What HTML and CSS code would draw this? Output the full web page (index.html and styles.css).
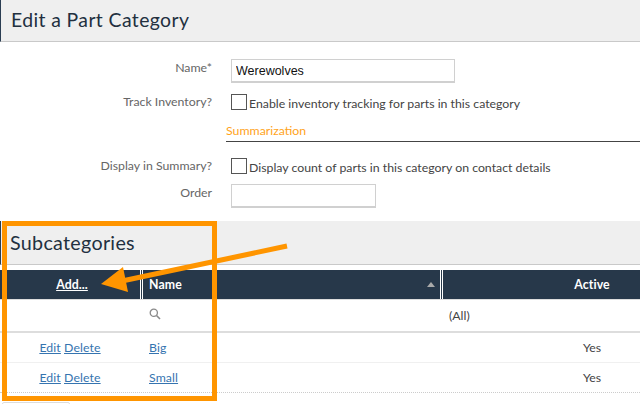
FILE: index.html
```html
<!DOCTYPE html>
<html>
    <head>
        <title>Edit a Part Category</title>
        <link rel="stylesheet" href="styles.css">
    </head>
    <body>
        <div class="pageTitle">Edit a Part Category</div>

        <div class="form">
            <div class="row nameRow">
                <label class="lbl">Name*</label>
                <input class="txt nameBox" type="text" value="Werewolves">
            </div>
            <div class="row trackRow">
                <label class="lbl">Track Inventory?</label>
                <span class="box"></span>
                <span class="chk">Enable inventory tracking for parts in this category</span>
            </div>
            <div class="sectionHead">Summarization</div>
            <div class="row displayRow">
                <label class="lbl">Display in Summary?</label>
                <span class="box"></span>
                <span class="chk">Display count of parts in this category on contact details</span>
            </div>
            <div class="row orderRow">
                <label class="lbl">Order</label>
                <input class="txt orderBox" type="text">
            </div>
        </div>

        <div class="subHead">Subcategories</div>

        <div class="grid">
            <div class="gridHead">
                <div class="cAct"><a href="#">Add...</a></div>
                <div class="cName">Name
                    <span class="sortUp"></span>
                </div>
                <div class="cActive">Active</div>
            </div>
            <div class="filterRow">
                <div class="cAct"></div>
                <div class="cName">
                    <svg width="12" height="12" viewBox="0 0 12 12"><circle cx="4.8" cy="4.8" r="3.6" fill="none" stroke="#8a8a8a" stroke-width="1.3"/><path d="M7.5 7.5L11 11" stroke="#8a8a8a" stroke-width="1.6"/></svg>
                </div>
                <div class="cActive filterAll">(All)</div>
            </div>
            <div class="dataRow">
                <div class="cAct"><a href="#">Edit</a> <a href="#">Delete</a></div>
                <div class="cName"><a href="#">Big</a></div>
                <div class="cActive">Yes</div>
            </div>
            <div class="dataRow">
                <div class="cAct"><a href="#">Edit</a> <a href="#">Delete</a></div>
                <div class="cName"><a href="#">Small</a></div>
                <div class="cActive">Yes</div>
            </div>
        </div>
        <div class="stub"></div>

        <!-- orange markup drawn over the screenshot -->
        <div class="callout"></div>
        <svg class="arrow" width="640" height="404" viewBox="0 0 640 404">
            <path d="M287 246L122 281" stroke="#ff9500" stroke-width="5" fill="none"/>
            <polygon points="101,284 123,267 128,292" fill="#ff9500"/>
        </svg>
    </body>
</html>
```

FILE: styles.css
```css
html, body{
    margin: 0;
    padding: 0;
}
body{
    width: 640px;
    height: 404px;
    overflow: hidden;
    position: relative;
    background-color: white;
    font-family: "Lato", "Open Sans", sans-serif;
    font-size: 12.3px;
    color: #444;
}
a{
    color: #3574b0;
    text-decoration: underline;
}

.pageTitle{
    height: 42px;
    line-height: 39px;
    box-sizing: border-box;
    background-color: #efefef;
    border-left: 1px solid #2a3d52;
    border-bottom: 1px solid #c9c9c9;
    padding-left: 10px;
    font-size: 19.4px;
    letter-spacing: 0.4px;
    color: #22303f;
}

.form{
    height: 179px;
    box-sizing: border-box;
    padding-top: 17px;
}
.row{
    display: flex;
    align-items: center;
}
.lbl{
    width: 212px;
    text-align: right;
    margin-right: 19px;
    padding-bottom: 2px;
    color: #666;
}
.txt{
    box-sizing: border-box;
    height: 24px;
    border: 1px solid #d0d0d0;
    border-bottom-width: 2px;
    padding: 0 4px;
    margin: 0;
    font-family: "Liberation Sans", sans-serif;
    font-size: 12.5px;
    color: #111;
    background-color: white;
}
.nameBox{
    width: 224px;
}
.orderBox{
    width: 145px;
}
.nameRow .lbl, .orderRow .lbl{
    padding-bottom: 8px;
}
.box{
    box-sizing: border-box;
    width: 16px;
    height: 16px;
    border: 1px solid #555;
    margin-right: 2px;
}
.chk{
    color: #444;
    padding-top: 2px;
}
.trackRow, .displayRow{
    height: 16px;
}
.trackRow{
    margin-top: 11px;
}
.sectionHead{
    margin: 12px 0 0 226px;
    height: 20px;
    line-height: 18px;
    box-sizing: border-box;
    border-bottom: 1px solid #444;
    color: #ffa31a;
}
.displayRow{
    margin-top: 16px;
}
.orderRow{
    margin-top: 10px;
}

.subHead{
    height: 44px;
    line-height: 43px;
    box-sizing: border-box;
    background-color: #efefef;
    border-left: 1px solid #2a3d52;
    border-bottom: 1px solid #c9c9c9;
    padding-left: 9px;
    font-size: 19.7px;
    letter-spacing: 0.3px;
    color: #22303f;
}

.grid{
    margin-top: 5px;
}
.gridHead, .filterRow, .dataRow{
    display: flex;
    align-items: center;
    box-sizing: border-box;
}
.cAct{
    width: 143px;
    padding-right: 3px;
    box-sizing: border-box;
    text-align: center;
}
.cName{
    width: 300px;
    box-sizing: border-box;
    padding-left: 6px;
    position: relative;
}
/* column runs on past the window in the real page, so keep the text where it was */
.cActive{
    flex: 1;
    padding-left: 101px;
    box-sizing: border-box;
    text-align: center;
}

.gridHead{
    height: 30px;
    background-color: #27384a;
    color: white;
    font-weight: bold;
    letter-spacing: 0.1px;
    border-bottom: 1px solid #ddd;
}
.gridHead a{
    color: white;
}
.gridHead .cAct, .gridHead .cName{
    height: 100%;
    line-height: 29px;
    padding-right: 0;
    border-right: 3px double white;
}
.gridHead .cAct{
    padding-left: 4px;
}
.sortUp{
    position: absolute;
    right: 5px;
    top: 12px;
    border-left: 4px solid transparent;
    border-right: 4px solid transparent;
    border-bottom: 5px solid #aaa;
}

.filterRow{
    height: 33px;
    border-bottom: 2px solid #ddd;
}
.filterRow .cName{
    padding-bottom: 3px;
}
.filterRow svg{
    display: block;
}
.filterAll{
    flex: none;
    margin-left: 6px;
    padding-left: 0;
    text-align: left;
}

.dataRow{
    height: 30px;
    border-bottom: 1px solid #f0f0f0;
}
.dataRow a{
    letter-spacing: 0.1px;
}
.dataRow:last-child{
    border-bottom: 1px dotted #ccc;
}

.stub{
    width: 66px;
    height: 6px;
    margin: 9px 0 0 2px;
    border: 1px solid #ddd;
    border-radius: 2px;
}

.callout{
    position: absolute;
    left: 2px;
    top: 221px;
    width: 215px;
    height: 180px;
    box-sizing: border-box;
    border: 5px solid #ff9500;
}
.arrow{
    position: absolute;
    left: 0;
    top: 0;
}
```
